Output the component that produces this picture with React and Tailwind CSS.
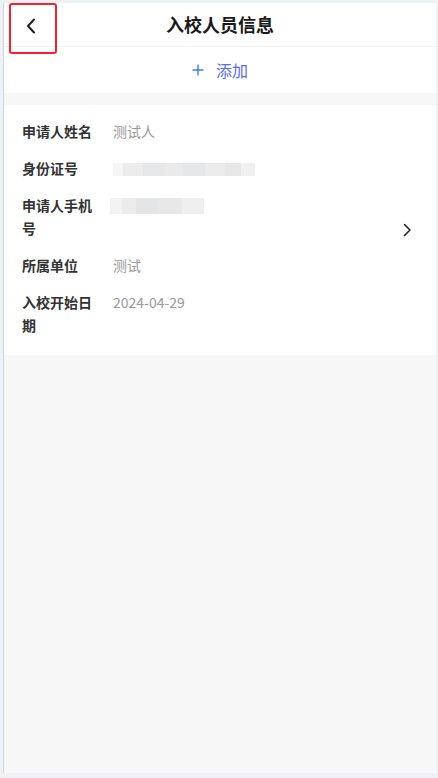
import React from "react";

const font = { fontFamily: '"Noto Sans CJK SC", "Noto Sans", sans-serif' };

function Row({ label, children }) {
  return (
    <div className="flex py-[7px]">
      <div className="w-[76px] shrink-0 text-[14px] leading-[23px] font-bold text-[#333333]">{label}</div>
      <div className="ml-[15px] text-[14px] leading-[23px] text-[#999999]">{children}</div>
    </div>
  );
}

export default function App() {
  return (
    <div className="w-[438px] h-[778px] bg-[#eef2f7] pt-[3px] pl-[3px] pr-[2px] pb-[5px]" style={font}>
      <div className="h-full flex flex-col bg-[#f7f7f8] border-l border-[#cfd4db]">
        {/* Header */}
        <div className="relative h-[44px] bg-white border-b border-[#f0f0f0] flex items-center justify-center">
          <div className="absolute left-[5px] top-0 w-[48px] h-[51px] border-2 border-[#f5222d] rounded-[3px] z-10" />
          <svg className="absolute left-[20px] top-[14px]" width="14" height="18" viewBox="0 0 14 18" fill="none">
            <path d="M10 2.5 L4 9 L10 15.5" stroke="#1f1f1f" strokeWidth="2" strokeLinecap="round" strokeLinejoin="round" />
          </svg>
          <span className="text-[18px] font-bold text-[#1a1a1a]">入校人员信息</span>
        </div>
        {/* Add */}
        <div className="h-[46px] bg-white flex items-center justify-center gap-[12px] text-[#4a78f2]">
          <svg width="12" height="12" viewBox="0 0 12 12">
            <path d="M6 0.5 V11.5 M0.5 6 H11.5" stroke="#3f7ef5" strokeWidth="1.4" />
          </svg>
          <span className="text-[16px] text-[#566cf0]">添加</span>
        </div>
        <div className="h-[12px]" />
        {/* Card */}
        <div className="relative bg-white pl-[18px] pr-[40px] pt-[8px] pb-[11px]">
          <Row label="申请人姓名">测试人</Row>
          <Row label="身份证号">
            <div className="h-[23px] flex items-center">
              <div className="h-[13px] w-[142px] flex mt-[2px]">
                <div className="w-[10px] bg-[#f5f5f5]" />
                <div className="w-[20px] bg-[#ececec]" />
                <div className="w-[22px] bg-[#e6e7e8]" />
                <div className="w-[18px] bg-[#eaeaea]" />
                <div className="w-[22px] bg-[#e5e6e7]" />
                <div className="w-[20px] bg-[#ebebeb]" />
                <div className="w-[16px] bg-[#e7e7e7]" />
                <div className="w-[14px] bg-[#f0f0f0]" />
              </div>
            </div>
          </Row>
          <Row label="申请人手机号">
            <div className="h-[23px] flex items-center -ml-[3px]">
              <div className="h-[16px] w-[94px] flex">
                <div className="w-[12px] bg-[#f3f3f3]" />
                <div className="w-[14px] bg-[#ececec]" />
                <div className="w-[22px] bg-[#e4e5e7]" />
                <div className="w-[24px] bg-[#e8e8e8]" />
                <div className="w-[22px] bg-[#efefef]" />
              </div>
            </div>
          </Row>
          <Row label="所属单位">测试</Row>
          <Row label="入校开始日期">2024-04-29</Row>
          <svg className="absolute right-[24px] top-1/2 -translate-y-1/2" width="9" height="14" viewBox="0 0 9 14" fill="none">
            <path d="M1.5 1.5 L7 7 L1.5 12.5" stroke="#1f1f1f" strokeWidth="1.5" strokeLinecap="round" strokeLinejoin="round" />
          </svg>
        </div>
        <div className="flex-1" />
      </div>
    </div>
  );
}
